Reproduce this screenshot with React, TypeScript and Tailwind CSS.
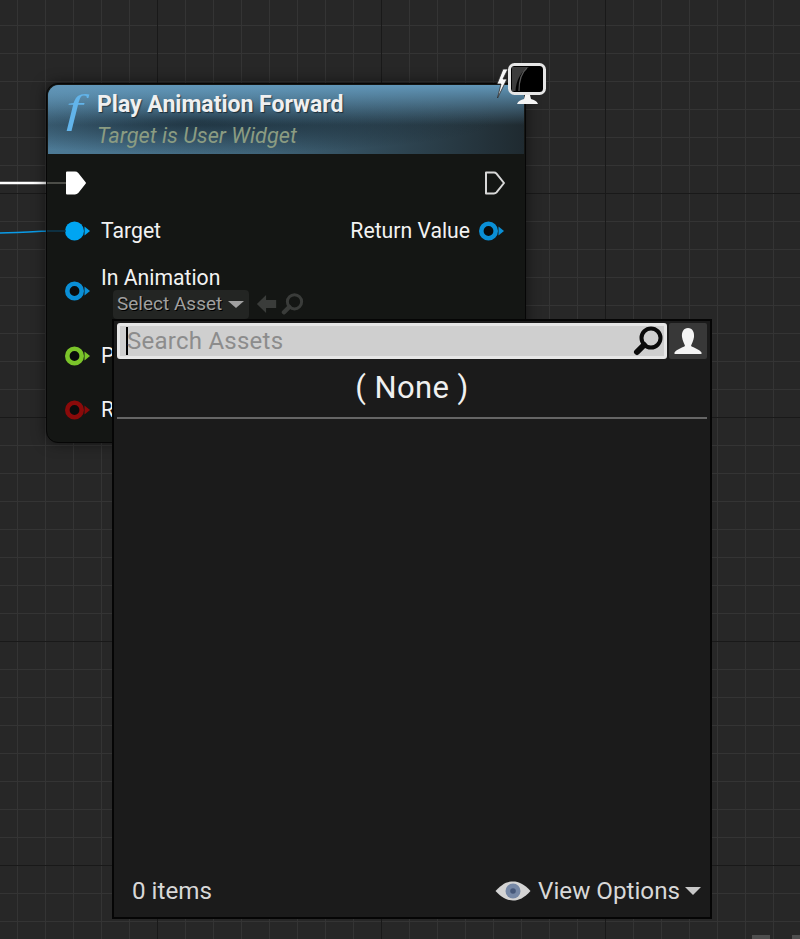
import React from 'react'

const sans = "font-['Roboto',sans-serif]"

// Round pin with the little arrow nub, same shape for every coloured pin
const DataPin = ({ color, filled = false, className = '' }: { color: string; filled?: boolean; className?: string }) => (
  <svg width="26" height="20" viewBox="0 0 26 20" className={className}>
    {filled ? (
      <ellipse cx="9.5" cy="10" rx="9.5" ry="9.5" fill={color} />
    ) : (
      <ellipse cx="9.5" cy="10" rx="7.2" ry="7.2" fill="#0a0c0c" stroke={color} strokeWidth="4.6" />
    )}
    <path d="M19.5 5.5 L25 10 L19.5 14.5 Z" fill={color} />
  </svg>
)

const ExecPin = ({ filled }: { filled: boolean }) => (
  <svg width="22" height="26" viewBox="0 0 22 26">
    <path
      d="M2 2.5 H10 Q11.5 2.5 12.5 3.6 L20 13 L12.5 22.4 Q11.5 23.5 10 23.5 H2 Z"
      fill={filled ? '#ffffff' : 'none'}
      stroke={filled ? '#ffffff' : '#d8d8d8'}
      strokeWidth="2"
      strokeLinejoin="round"
    />
  </svg>
)

const Wires = () => (
  <svg width="800" height="939" className="absolute left-0 top-0">
    <path d="M0 183 H47" stroke="#ffffff" strokeWidth="2.5" fill="none" />
    <path d="M0 233 C15 233 30 232 47 231" stroke="#0a9be8" strokeWidth="1.5" fill="none" />
  </svg>
)

// the part of each wire that shows through the node, dimmed
const DimWires = () => (
  <svg width="800" height="939" className="pointer-events-none absolute left-0 top-0">
    <path d="M47 183 H66" stroke="#4c4d48" strokeWidth="2" fill="none" />
    <path d="M47 231 H66" stroke="#0c3a50" strokeWidth="1.5" fill="none" />
  </svg>
)

const MonitorBadge = () => (
  <svg width="56" height="48" viewBox="0 0 56 48" className="absolute left-[494px] top-[59px]">
    <path d="M9 10 L3 25 H7 L3.5 39 L13 20 H9 L14 10 Z" fill="#f6f6f6" stroke="#2a2a2a" strokeWidth="0.8" />
    <rect x="15.5" y="5.5" width="35" height="29" rx="5" fill="#000000" stroke="#e6e6e6" strokeWidth="3" />
    <path d="M18 8 H35 C27 12 22 22 21.5 32 H18 Z" fill="#3c3c3c" />
    <path d="M33 9 C28 13 25 22 25 32" stroke="#5a5a5a" strokeWidth="1.2" fill="none" />
    <path d="M31 36 H36 L37 40 C40 41 43 42 44 45 H23 C24 42 27 41 30 40 Z" fill="#f4f4f4" />
  </svg>
)

const SearchGlyph = ({ color, width = 3, className = '' }: { color: string; width?: number; className?: string }) => (
  <svg width="32" height="32" viewBox="0 0 32 32" className={className}>
    <circle cx="18" cy="13" r="9.5" fill="none" stroke={color} strokeWidth={width} />
    <path d="M11 20 L4 27" stroke={color} strokeWidth={width + 2} strokeLinecap="round" />
  </svg>
)

const NodeCard = () => (
  <div className={`absolute left-[46px] top-[83px] flex h-[360px] w-[480px] flex-col rounded-[12px] border border-[#060606] bg-[#141614] shadow-[0_0_14px_rgba(0,0,0,0.55)] ${sans}`}>
    <div className="relative m-px h-[69px] shrink-0 overflow-hidden rounded-t-[11px] bg-[linear-gradient(90deg,#4d7a96_0%,#3f6378_45%,#1f2a30_100%)]">
      <div className="absolute inset-0 bg-[radial-gradient(ellipse_at_32%_52%,rgba(20,35,45,0.8)_0%,rgba(20,35,45,0)_65%)]" />
      <div className="absolute inset-0 bg-[linear-gradient(180deg,#6196b8_0%,rgba(90,140,175,0)_58%)]" />
      <div className="relative flex h-full pl-[18px] pt-[5px]">
        <span className="w-[26px] origin-left scale-x-[1.45] font-['Liberation_Serif',serif] text-[41px] italic leading-[36px] text-[#62b4ea]">f</span>
        <div className="flex flex-col pl-[5px]">
          <span className="text-[23px] font-bold leading-[30px] text-[#f0f0f0] [text-shadow:1px_1px_1px_rgba(0,0,0,0.5)]">Play Animation Forward</span>
          <span className="pt-[1px] text-[21.7px] italic leading-[30px] text-[#8b9c82]">Target is User Widget</span>
        </div>
      </div>
    </div>
    <div className="flex h-[56px] shrink-0 items-center justify-between pl-[18px] pr-[19px]">
      <ExecPin filled />
      <ExecPin filled={false} />
    </div>
    <div className="flex h-[40px] shrink-0 items-center justify-between pl-[18px] pr-[20px] text-[21.2px] text-[#f2f2f2]">
      <div className="flex items-center gap-[10px]">
        <DataPin color="#00a5f2" filled />
        <span>Target</span>
      </div>
      <div className="flex items-center gap-[9px]">
        <span>Return Value</span>
        <DataPin color="#0a8fd6" />
      </div>
    </div>
    <div className="flex h-[80px] shrink-0 items-center pl-[18px]">
      <DataPin color="#0a8fd6" />
      <div className="flex flex-col pl-[10px] text-[21.2px] text-[#f2f2f2]">
        <span className="pt-[1px] leading-[26px]">In Animation</span>
        <div className="-mt-[1px] ml-[12px] flex items-center gap-[7px]">
          <div className="flex h-[29px] items-center gap-[6px] rounded-[4px] bg-[#232523] pl-[4px] pr-[5px] text-[19px] text-[#a0a0a0] [text-shadow:1px_1px_0_#000]">
            <span>Select Asset</span>
            <span className="h-0 w-0 border-x-[8px] border-t-[7px] border-x-transparent border-t-[#a0a0a0]" />
          </div>
          <svg width="22" height="20" viewBox="0 0 24 20" preserveAspectRatio="none">
            <path d="M1 10 L11 1 V6 H22 V14 H11 V19 Z" fill="#3a3c3a" />
          </svg>
          <SearchGlyph color="#3a3c3a" width={4} className="-ml-[4px] h-[24px] w-[24px]" />
        </div>
      </div>
    </div>
    <div className="flex h-[50px] shrink-0 items-center gap-[10px] pl-[18px] text-[21.2px] text-[#f2f2f2]">
      <DataPin color="#7bc42a" />
      <span>P</span>
    </div>
    <div className="flex h-[58px] shrink-0 items-center gap-[10px] pl-[18px] text-[21.2px] text-[#f2f2f2]">
      <DataPin color="#8a0a0a" />
      <span>R</span>
    </div>
  </div>
)

const AssetPicker = () => (
  <div className={`absolute left-[112px] top-[319px] flex h-[600px] w-[600px] flex-col border-2 border-[#050505] bg-[#1b1b1b] ${sans}`}>
    <div className="flex h-[38px] shrink-0 items-center gap-[2px] pl-[3px] pr-[3px] pt-[1px]">
      <div className="relative flex h-[36px] flex-1 items-center rounded-[3px] border-[3px] border-[#e6e6e6] bg-[#cfcfcf] pl-[6px]">
        <span className="-mr-[1px] h-[28px] w-[2px] bg-black" />
        <span className="text-[24px] tracking-[0.25px] text-[#8c8c8c]">Search Assets</span>
        <SearchGlyph color="#0a0a0a" width={4} className="absolute right-[-1px] top-[-1px]" />
      </div>
      <div className="flex h-[36px] w-[38px] items-center justify-center rounded-[2px] bg-[#383838]">
        <svg width="30" height="28" viewBox="0 0 30 28" className="blur-[0.4px]">
          <path
            d="M15 1 C19.5 1 21.5 5 21 10 C20.5 14 18.5 17 18 19 C21 21 26 22 28.5 25.5 L28.5 27 H1.5 L1.5 25.5 C4 22 9 21 12 19 C11.5 17 9.5 14 9 10 C8.5 5 10.5 1 15 1 Z"
            fill="#f4f4f4"
          />
        </svg>
      </div>
    </div>
    <div className="flex h-[58px] shrink-0 items-center justify-center text-[31px] tracking-[0.4px] text-[#f0f0f0]">( None )</div>
    <div className="mx-[3px] h-[2px] shrink-0 bg-[#666666]" />
    <div className="flex-1" />
    <div className="flex h-[54px] shrink-0 items-center justify-between pl-[18px] pr-[9px] pt-[3px] text-[24.2px] text-[#d8d8d8]">
      <span>0 items</span>
      <div className="flex items-center gap-[5px]">
        <svg width="36" height="20" viewBox="0 0 36 20" className="mr-[2px] blur-[0.4px]">
          <path d="M0.5 10 C7 3 12 0.5 18 0.5 C24 0.5 29 3 35.5 10 C29 17 24 19.5 18 19.5 C12 19.5 7 17 0.5 10 Z" fill="#d4d4d4" />
          <circle cx="18" cy="10" r="7.5" fill="#7688a6" />
          <circle cx="18" cy="10" r="2.8" fill="#46587a" />
        </svg>
        <span>View Options</span>
        <span className="h-0 w-0 border-x-[8px] border-t-[8px] border-x-transparent border-t-[#c8c8c8]" />
      </div>
    </div>
  </div>
)

export default function App() {
  return (
    <div className="relative h-[939px] w-[800px] overflow-hidden bg-[#272727] bg-[linear-gradient(90deg,#191919_1px,transparent_1px),linear-gradient(180deg,#191919_1px,transparent_1px),linear-gradient(90deg,#343434_1px,transparent_1px),linear-gradient(180deg,#343434_1px,transparent_1px)] bg-[size:224px_224px,224px_224px,28px_28px,28px_28px] bg-[position:157px_0,0_193px,17px_0,0_25px]">
      <Wires />
      <NodeCard />
      <DimWires />
      <MonitorBadge />
      <AssetPicker />
      <div className="absolute left-[752px] top-[935px] h-[4px] w-[18px] bg-[#4e4e4e]" />
      <div className="absolute left-[792px] top-[935px] h-[4px] w-[8px] bg-[#4e4e4e]" />
    </div>
  )
}
